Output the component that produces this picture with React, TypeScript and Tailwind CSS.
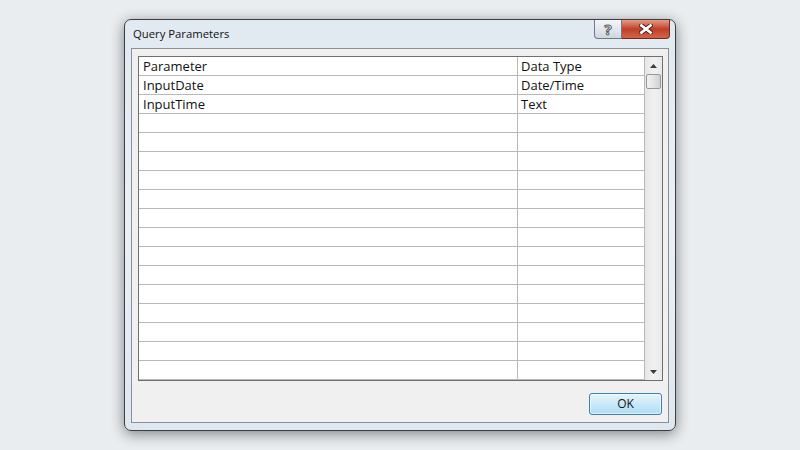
const rows = [
  { name: "InputDate", type: "Date/Time" },
  { name: "InputTime", type: "Text" },
  ...Array.from({ length: 14 }, () => ({ name: "", type: "" })),
];

const HelpButton = () => (
  <div className="w-[28px] h-[19px] flex items-center justify-center border border-t-0 border-[#707a86] rounded-bl-[4px] bg-gradient-to-b from-[#f3f6f9] via-[#e2e7ed] to-[#cfd6de]">
    <span className="text-[15px] font-bold leading-none text-[#f7f7f7] [-webkit-text-stroke:1px_#5c5c5c]">
      ?
    </span>
  </div>
);

const CloseButton = () => (
  <div className="w-[48px] h-[19px] flex items-center justify-center border border-t-0 border-l-0 border-[#6e2a1f] rounded-br-[4px] bg-gradient-to-b from-[#e49a87] via-[#c13d27] to-[#d2634b]">
    <svg width="14" height="10" viewBox="0 0 14 10">
      <path
        d="M2.5 1.5 L11.5 8.5 M11.5 1.5 L2.5 8.5"
        stroke="#4a1d16"
        strokeWidth="4.6"
        strokeLinecap="square"
      />
      <path
        d="M2.5 1.5 L11.5 8.5 M11.5 1.5 L2.5 8.5"
        stroke="#ffffff"
        strokeWidth="2.8"
        strokeLinecap="square"
      />
    </svg>
  </div>
);

const ScrollBar = () => (
  <div className="w-[17px] h-full flex flex-col items-center bg-gradient-to-r from-[#e6e6e6] via-[#f1f1f1] to-[#e9e9e9]">
    <div className="h-[17px] flex items-center justify-center">
      <svg width="7" height="4" viewBox="0 0 7 4">
        <path d="M0 4 L3.5 0 L7 4 Z" fill="#3b3b3b" />
      </svg>
    </div>
    <div className="w-[15px] h-[15px] border border-[#979797] rounded-[2px] bg-gradient-to-r from-[#f2f2f2] via-[#e4e4e4] to-[#cfcfcf]" />
    <div className="flex-1" />
    <div className="h-[17px] flex items-center justify-center">
      <svg width="7" height="4" viewBox="0 0 7 4">
        <path d="M0 0 L7 0 L3.5 4 Z" fill="#3b3b3b" />
      </svg>
    </div>
  </div>
);

const App = () => {
  return (
    <div className="w-[800px] h-[450px] flex items-center justify-center bg-[#e9edf0] font-['Segoe_UI','Open_Sans',sans-serif]">
      <div className="w-[552px] h-[412px] flex flex-col border border-[#3b3f44] rounded-[7px] px-[6px] pb-[7px] bg-gradient-to-b from-[#e1e9f1] via-[#eaf0f6] to-[#dfe7ef] shadow-[0_3px_14px_rgba(0,0,0,0.45)]">
        <div className="h-[28px] flex items-start justify-between">
          <p className="mt-[6px] ml-[2px] text-[11.3px] text-[#111]">
            Query Parameters
          </p>
          <div className="flex mr-[-1px]">
            <HelpButton />
            <CloseButton />
          </div>
        </div>
        <div className="flex-1 flex flex-col border border-[#8b9097] bg-[#f0f0f0] px-[6px] pt-[7px]">
          <div className="w-[525px] h-[325px] flex border border-[#6f6f6f] bg-white overflow-hidden text-[13px] text-[#111]">
            <div className="flex-1 flex flex-col">
              <div className="flex h-[19px] shrink-0 border-b border-[#b9b9b9]">
                <div className="w-[379px] pl-[4px] leading-[18px] border-r border-[#b9b9b9]">
                  Parameter
                </div>
                <div className="w-[127px] pl-[3px] leading-[18px] border-r border-[#b9b9b9]">
                  Data Type
                </div>
              </div>
              {rows.map((r, i) => (
                <div
                  key={i}
                  className="flex h-[19px] shrink-0 border-b border-[#b9b9b9]"
                >
                  <div className="w-[379px] pl-[4px] leading-[18px] border-r border-[#b9b9b9]">
                    {r.name}
                  </div>
                  <div className="w-[127px] pl-[3px] leading-[18px] border-r border-[#b9b9b9]">
                    {r.type}
                  </div>
                </div>
              ))}
            </div>
            <ScrollBar />
          </div>
          <div className="flex justify-end mt-[12px]">
            <button className="w-[73px] h-[22px] border border-[#3c7fb1] rounded-[3px] bg-gradient-to-b from-[#e5f4fc] via-[#c9e8f9] to-[#b0dcf5] text-[12px] text-[#111] shadow-[inset_0_0_0_1px_rgba(255,255,255,0.6)]">
              OK
            </button>
          </div>
        </div>
      </div>
    </div>
  );
};

export default App;
